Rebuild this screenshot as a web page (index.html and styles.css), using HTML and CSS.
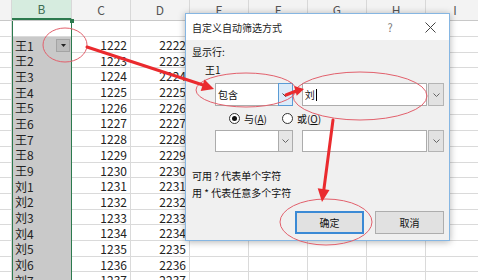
FILE: index.html
```html
<!DOCTYPE html>
<html lang="zh-CN">
<head>
    <meta charset="UTF-8">
    <title>自定义自动筛选方式</title>
    <link rel="stylesheet" href="styles.css">
</head>
<body>

    <div class="sheet">
        <div class="head">
            <div class="c"></div><div class="c colb">B</div><div class="c">C</div><div class="c">D</div><div class="c">E</div><div class="c">F</div><div class="c">G</div><div class="c">H</div><div class="c">I</div>
        </div>
        <div class="row first"><div class="c"></div><div class="c b"></div><div class="c"></div><div class="c"></div><div class="rest"></div></div>
        <div class="row"><div class="c"></div><div class="c b sel">王1<span class="filter"><svg width="5" height="3"><path d="M0 0H5L2.5 3Z" fill="#222"/></svg></span></div><div class="c n">1222</div><div class="c n">2222</div><div class="rest"></div></div>
        <div class="row"><div class="c"></div><div class="c b sel">王2</div><div class="c n">1223</div><div class="c n">2223</div><div class="rest"></div></div>
        <div class="row"><div class="c"></div><div class="c b sel">王3</div><div class="c n">1224</div><div class="c n">2224</div><div class="rest"></div></div>
        <div class="row"><div class="c"></div><div class="c b sel">王4</div><div class="c n">1225</div><div class="c n">2225</div><div class="rest"></div></div>
        <div class="row"><div class="c"></div><div class="c b sel">王5</div><div class="c n">1226</div><div class="c n">2226</div><div class="rest"></div></div>
        <div class="row"><div class="c"></div><div class="c b sel">王6</div><div class="c n">1227</div><div class="c n">2227</div><div class="rest"></div></div>
        <div class="row"><div class="c"></div><div class="c b sel">王7</div><div class="c n">1228</div><div class="c n">2228</div><div class="rest"></div></div>
        <div class="row"><div class="c"></div><div class="c b sel">王8</div><div class="c n">1229</div><div class="c n">2229</div><div class="rest"></div></div>
        <div class="row"><div class="c"></div><div class="c b sel">王9</div><div class="c n">1230</div><div class="c n">2230</div><div class="rest"></div></div>
        <div class="row"><div class="c"></div><div class="c b sel">刘1</div><div class="c n">1231</div><div class="c n">2231</div><div class="rest"></div></div>
        <div class="row"><div class="c"></div><div class="c b sel">刘2</div><div class="c n">1232</div><div class="c n">2232</div><div class="rest"></div></div>
        <div class="row"><div class="c"></div><div class="c b sel">刘3</div><div class="c n">1233</div><div class="c n">2233</div><div class="rest"></div></div>
        <div class="row"><div class="c"></div><div class="c b sel">刘4</div><div class="c n">1234</div><div class="c n">2234</div><div class="rest"></div></div>
        <div class="row"><div class="c"></div><div class="c b sel">刘5</div><div class="c n">1235</div><div class="c n">2235</div><div class="rest"></div></div>
        <div class="row"><div class="c"></div><div class="c b sel">刘6</div><div class="c n">1236</div><div class="c n">2236</div><div class="rest"></div></div>
        <div class="row"><div class="c"></div><div class="c b sel">刘7</div><div class="c n">1237</div><div class="c n">2237</div><div class="rest"></div></div>
        <span class="handle"></span>
    </div>

    <div class="dialog">
        <div class="titlebar">
            <span class="title">自定义自动筛选方式</span>
            <span class="help">?</span>
            <span class="close"><svg width="11" height="11"><path d="M0.5 0.5L10.5 10.5M10.5 0.5L0.5 10.5" stroke="#444" stroke-width="1"/></svg></span>
        </div>
        <div class="body">
            <div class="line">显示行:</div>
            <div class="line field">王1</div>

            <div class="crow">
                <div class="combo">
                    <span class="val">包含</span>
                    <span class="arrow hot"><svg width="7" height="4"><path d="M0.5 0.5L3.5 3.5L6.5 0.5" fill="none" stroke="#444"/></svg></span>
                </div>
                <div class="edit"><span class="val">刘<i class="caret"></i></span></div>
                <span class="drop"><svg width="7" height="4"><path d="M0.5 0.5L3.5 3.5L6.5 0.5" fill="none" stroke="#666"/></svg></span>
            </div>

            <div class="radios">
                <span class="radio on"></span><span class="rlabel">与(<u>A</u>)</span>
                <span class="radio"></span><span class="rlabel">或(<u>O</u>)</span>
            </div>

            <div class="crow second">
                <div class="combo">
                    <span class="val"></span>
                    <span class="arrow"><svg width="7" height="4"><path d="M0.5 0.5L3.5 3.5L6.5 0.5" fill="none" stroke="#666"/></svg></span>
                </div>
                <div class="edit"><span class="val"></span></div>
                <span class="drop"><svg width="7" height="4"><path d="M0.5 0.5L3.5 3.5L6.5 0.5" fill="none" stroke="#666"/></svg></span>
            </div>

            <div class="line hint">可用 ? 代表单个字符</div>
            <div class="line hint2">用 * 代表任意多个字符</div>

            <div class="btns">
                <button class="btn default">确定</button>
                <button class="btn">取消</button>
            </div>
        </div>
    </div>

    <svg class="marks" width="478" height="280">
        <g fill="none" stroke="#e2606c" stroke-width="1">
            <ellipse cx="65" cy="45" rx="22" ry="17"/>
            <ellipse cx="246" cy="90" rx="50" ry="17"/>
            <ellipse cx="360" cy="96" rx="67" ry="24"/>
            <ellipse cx="326" cy="222" rx="46" ry="23"/>
        </g>
        <g stroke="#ea2a2e" stroke-width="3" stroke-linecap="round">
            <line x1="87" y1="47" x2="203" y2="85"/>
            <line x1="286" y1="95" x2="296" y2="91"/>
            <line x1="333" y1="120" x2="323.8" y2="190"/>
        </g>
        <g fill="#ea2a2e">
            <polygon points="214,89 204.5,79.5 200.7,90.9"/>
            <polygon points="304,89 296.7,95.7 294.1,86.1"/>
            <polygon points="322,202 329.5,189.9 317.7,188.3"/>
        </g>
    </svg>

</body>
</html>
```

FILE: styles.css
```css
body {
    margin: 0;
    width: 478px;
    height: 280px;
    overflow: hidden;
    background: #fff;
    font-family: "Noto Sans CJK SC", sans-serif;
    position: relative;
}
.sheet {
    font-size: 12px;
    color: #222;
    position: relative;
}
.head, .row {
    display: grid;
    grid-template-columns: 12px 60px 59px 59px 1fr;
    box-sizing: border-box;
    border-bottom: 1px solid #dadada;
}
.head {
    grid-template-columns: 12px 60px repeat(7, 59px);
    height: 21px;
    background: #f3f3f3;
    border-bottom: 1px solid #c8c8c8;
    color: #555;
}
.head .c {
    text-align: center;
    line-height: 20px;
    border-right: 1px solid #d8d8d8;
}
.head .colb {
    background: #d6ecdf;
    color: #3d6e52;
    border-bottom: 2px solid #2c7a4e;
    line-height: 18px;
}
.row {
    height: 15.7px;
    line-height: 15px;
}
.row.first {
    height: 16px;
}
.c {
    border-right: 1px solid #dadada;
    box-sizing: border-box;
    white-space: nowrap;
}
.n {
    text-align: right;
    padding-right: 3px;
}
.b {
    box-shadow: inset 1px 0 #2c7a4e;
    border-right: 1px solid #2c7a4e;
    padding-left: 3px;
    display: flex;
    align-items: center;
}
.b.sel {
    background: #c9c9c9;
    border-bottom: 0;
}
.row .b {
    margin-bottom: -1px;
}
.rest {
    background: repeating-linear-gradient(to right, transparent 0 58px, #dadada 58px 59px);
}
.filter {
    margin-left: auto;
    margin-right: 1px;
    width: 14px;
    height: 13px;
    box-sizing: border-box;
    border: 1px solid #a4a4a4;
    background: #bcbcbc;
    display: flex;
    align-items: center;
    justify-content: center;
}
.handle {
    position: absolute;
    left: 70px;
    top: 19px;
    width: 4px;
    height: 4px;
    background: #2c7a4e;
}

/* dialog */
.dialog {
    position: absolute;
    left: 185px;
    top: 13px;
    width: 265px;
    height: 228px;
    box-sizing: border-box;
    border: 1px solid #86b6e2;
    background: #f0f0f0;
    box-shadow: 0 1px 7px rgba(0, 0, 0, 0.3);
    font-size: 10px;
    color: #111;
}
.titlebar {
    height: 26px;
    background: #fff;
    display: flex;
    align-items: center;
    padding-left: 6px;
}
.title {
    flex: 1;
    color: #222;
}
.help {
    width: 20px;
    text-align: center;
    color: #777;
    font-size: 11px;
    margin-right: 19px;
}
.close {
    width: 22px;
    margin-right: 8px;
    display: flex;
    justify-content: center;
}
.body {
    padding: 5px 5px 0 6px;
}
.line {
    line-height: 14px;
    height: 14px;
}
.field {
    margin-top: 4px;
    padding-left: 13px;
}
.crow {
    display: flex;
    margin-top: 6px;
    margin-left: 23px;
    height: 23px;
}
.crow.second {
    margin-top: 5px;
    height: 22px;
}
.combo {
    width: 78px;
    display: flex;
    box-sizing: border-box;
    border: 1px solid #acacac;
    background: #fff;
}
.val {
    flex: 1;
    padding-left: 2px;
    display: flex;
    align-items: center;
}
.arrow {
    width: 14px;
    box-sizing: border-box;
    border-left: 1px solid #acacac;
    background: #e6e6e6;
    display: flex;
    align-items: center;
    justify-content: center;
}
.arrow.hot {
    border: 1px solid #5a9bd5;
    margin: -1px -1px -1px 0;
    width: 15px;
    background: #dcecfa;
}
.edit {
    width: 126px;
    margin-left: 9px;
    box-sizing: border-box;
    border: 1px solid #acacac;
    background: #fff;
    display: flex;
}
.caret {
    display: inline-block;
    width: 1px;
    height: 12px;
    background: #000;
    margin-left: 1px;
}
.drop {
    width: 16px;
    margin-left: 1px;
    box-sizing: border-box;
    border: 1px solid #b4b4b4;
    background: #e2e2e2;
    display: flex;
    align-items: center;
    justify-content: center;
}
.radios {
    display: flex;
    align-items: center;
    margin-top: 5px;
    margin-left: 37px;
    height: 14px;
}
.radio {
    width: 11px;
    height: 11px;
    box-sizing: border-box;
    border-radius: 50%;
    border: 1px solid #333;
    background: #fff;
    display: flex;
    align-items: center;
    justify-content: center;
}
.radio.on::after {
    content: "";
    width: 5px;
    height: 5px;
    border-radius: 50%;
    background: #111;
}
.rlabel {
    margin-left: 4px;
    margin-right: 15px;
}
.hint {
    margin-top: 17px;
}
.hint2 {
    margin-top: 3px;
}
.btns {
    display: flex;
    justify-content: flex-end;
    gap: 11px;
    margin-top: 11px;
}
.btn {
    width: 69px;
    height: 23px;
    box-sizing: border-box;
    border: 1px solid #adadad;
    background: #e1e1e1;
    font: inherit;
    color: #111;
    padding: 0;
}
.btn.default {
    border: 2px solid #3b8ad5;
}

.marks {
    position: absolute;
    left: 0;
    top: 0;
    pointer-events: none;
}
```
